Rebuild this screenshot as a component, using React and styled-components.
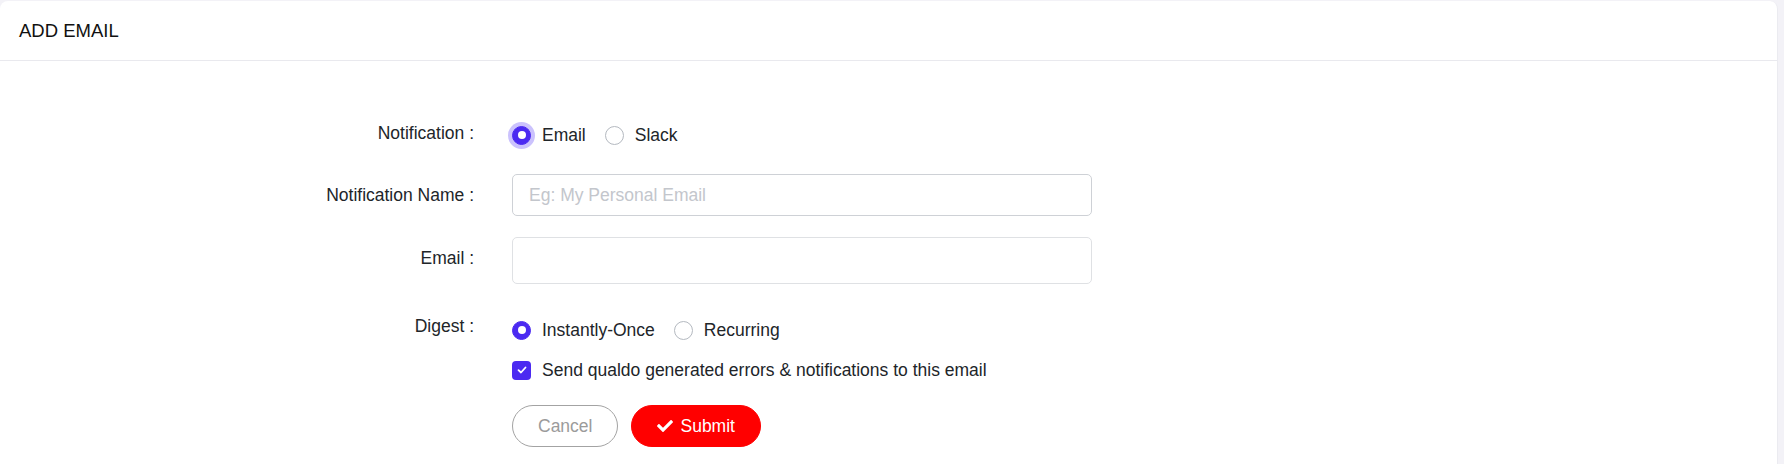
import React, { useState } from "react";
import styled, { createGlobalStyle } from "styled-components";
import { FaCheck } from "react-icons/fa";

const GlobalStyle = createGlobalStyle`
  html, body {
    margin: 0;
    padding: 0;
    background: #f3f2f7;
    font-family: "Liberation Sans", Arial, sans-serif;
  }
  * {
    box-sizing: border-box;
  }
`;

const Card = styled.div`
  margin: 1px 6px 0 0;
  min-height: calc(100vh - 1px);
  background: #ffffff;
  border-radius: 8px 8px 0 0;
  border-right: 1px solid #ebebf0;
`;

const CardHeader = styled.div`
  height: 60px;
  display: flex;
  align-items: center;
  padding: 0 19px;
  border-bottom: 1px solid #e9e9ee;
`;

const Title = styled.h5`
  margin: 0;
  font-size: 18.5px;
  font-weight: 400;
  color: #111;
`;

const Form = styled.form`
  padding-top: 60px;
  display: flex;
  flex-direction: column;
`;

const Row = styled.div`
  display: grid;
  grid-template-columns: 474px 580px;
  column-gap: 38px;
  align-items: center;
  margin-top: ${(p) => p.$gap || 0}px;
`;

const Label = styled.label`
  text-align: right;
  font-size: 17.5px;
  color: #212529;
  position: relative;
  top: ${(p) => p.$shift || 0}px;
`;

const Options = styled.div`
  display: flex;
  align-items: center;
  height: 28px;
`;

const Option = styled.label`
  display: flex;
  align-items: center;
  gap: 11px;
  margin-right: 19px;
  font-size: 17.5px;
  color: #212529;
  cursor: pointer;
`;

const RadioDot = styled.span`
  width: 19px;
  height: 19px;
  border-radius: 50%;
  flex-shrink: 0;
  display: flex;
  align-items: center;
  justify-content: center;
  background: ${(p) => (p.$on ? "#4b2af1" : "#fff")};
  border: 1px solid ${(p) => (p.$on ? "#4b2af1" : "#b4b9c0")};
  box-shadow: ${(p) => (p.$focus ? "0 0 0 4px #cbc2fd" : "none")};

  &::after {
    content: "";
    display: ${(p) => (p.$on ? "block" : "none")};
    width: 8px;
    height: 8px;
    border-radius: 50%;
    background: #fff;
  }
`;

const CheckBox = styled.span`
  width: 19px;
  height: 19px;
  border-radius: 4px;
  flex-shrink: 0;
  display: flex;
  align-items: center;
  justify-content: center;
  background: #4b2af1;
`;

const Input = styled.input`
  width: 580px;
  height: ${(p) => p.$h}px;
  padding: 0 16px;
  border: 1px solid ${(p) => p.$line};
  border-radius: 5px;
  font-family: inherit;
  font-size: 17.5px;
  color: #212529;
  outline: none;

  &::placeholder {
    color: #c3c6cc;
  }
`;

const Buttons = styled.div`
  display: flex;
  gap: 13px;
`;

const PillButton = styled.button`
  height: 42px;
  padding: 0 25px;
  border-radius: 21px;
  font-family: inherit;
  font-size: 17.5px;
  display: flex;
  align-items: center;
  gap: 7px;
  cursor: pointer;
  border: 1px solid ${(p) => (p.$primary ? "#ff0000" : "#a3a3a3")};
  background: ${(p) => (p.$primary ? "#ff0000" : "#fff")};
  color: ${(p) => (p.$primary ? "#fff" : "#9b9b9b")};
`;

const Radio = ({ on, focus, label, onClick }) => (
  <Option onClick={onClick}>
    <RadioDot $on={on} $focus={focus} />
    {label}
  </Option>
);

export default function App() {
  const [channel, setChannel] = useState("email");
  const [digest, setDigest] = useState("once");

  return (
    <>
      <GlobalStyle />
      <Card>
        <CardHeader>
          <Title>ADD EMAIL</Title>
        </CardHeader>
        <Form onSubmit={(e) => e.preventDefault()}>
          <Row>
            <Label $shift={-2}>Notification :</Label>
            <Options>
              <Radio
                on={channel === "email"}
                focus={channel === "email"}
                label="Email"
                onClick={() => setChannel("email")}
              />
              <Radio
                on={channel === "slack"}
                focus={channel === "slack"}
                label="Slack"
                onClick={() => setChannel("slack")}
              />
            </Options>
          </Row>
          <Row $gap={25}>
            <Label>Notification Name :</Label>
            <Input $h={42} $line="#ced1d6" placeholder="Eg: My Personal Email" />
          </Row>
          <Row $gap={21}>
            <Label $shift={-2}>Email :</Label>
            <Input $h={47} $line="#dfe1e4" />
          </Row>
          <Row $gap={32}>
            <Label $shift={-4}>Digest :</Label>
            <Options>
              <Radio
                on={digest === "once"}
                label="Instantly-Once"
                onClick={() => setDigest("once")}
              />
              <Radio
                on={digest === "recurring"}
                label="Recurring"
                onClick={() => setDigest("recurring")}
              />
            </Options>
          </Row>
          <Row $gap={12}>
            <span />
            <Options>
              <Option>
                <CheckBox>
                  <svg width="10" height="10" viewBox="0 0 10 10">
                    <polyline
                      points="1.5,5.2 4,7.5 8.5,2.5"
                      fill="none"
                      stroke="#fff"
                      strokeWidth="1.8"
                      strokeLinecap="round"
                      strokeLinejoin="round"
                    />
                  </svg>
                </CheckBox>
                Send qualdo generated errors &amp; notifications to this email
              </Option>
            </Options>
          </Row>
          <Row $gap={21}>
            <span />
            <Buttons>
              <PillButton type="button">Cancel</PillButton>
              <PillButton type="submit" $primary>
                <FaCheck size={16} />
                Submit
              </PillButton>
            </Buttons>
          </Row>
        </Form>
      </Card>
    </>
  );
}
